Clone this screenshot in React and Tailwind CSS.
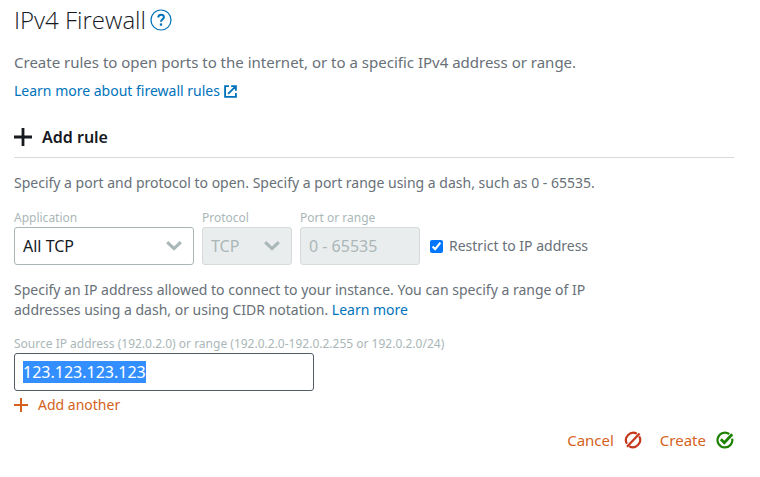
import React, { useEffect, useRef, useState } from 'react';

const PlusIcon = ({ size, stroke }) => (
  <svg width={size} height={size} viewBox="0 0 18 18" fill="none" stroke="currentColor" strokeWidth={stroke} aria-hidden="true">
    <path d="M9 0v18M0 9h18" />
  </svg>
);

const HelpIcon = () => (
  <svg width="22" height="22" viewBox="0 0 22 22" fill="none" stroke="currentColor" aria-hidden="true">
    <circle cx="11" cy="11" r="10" strokeWidth="1.2" />
    <path d="M8.3 8.6c0-1.9 1.2-2.8 2.8-2.8s2.8.9 2.8 2.4c0 2.1-2.9 2.2-2.9 4.6" strokeWidth="2" />
    <path d="M11 14.4v2.3" strokeWidth="2.3" />
  </svg>
);

const ExternalIcon = () => (
  <svg width="13" height="13" viewBox="0 0 12 12" fill="none" stroke="currentColor" strokeWidth="1.7" aria-hidden="true">
    <path d="M4.6 1H1v10h10V7.4M3.8 8.2l6.4-6.4M6.6 1H11v4.4" />
  </svg>
);

const ChevronIcon = () => (
  <svg width="16" height="10" viewBox="0 0 16 10" fill="none" stroke="currentColor" strokeWidth="3.2" aria-hidden="true">
    <path d="M1.2 1.2 8 7.6l6.8-6.4" />
  </svg>
);

const CancelIcon = () => (
  <svg width="18" height="18" viewBox="0 0 18 18" fill="none" stroke="#c5381c" strokeWidth="2.2" aria-hidden="true">
    <path d="M2.9 12.8A7.4 7.4 0 0 1 12.9 2.7M15.2 5.2A7.4 7.4 0 0 1 5.2 15.3" />
    <path d="M3 15.8 15.6 2.6" />
  </svg>
);

const CreateIcon = () => (
  <svg width="18" height="18" viewBox="0 0 18 18" fill="none" stroke="#1d8102" aria-hidden="true">
    <path d="M13.2 3A7.4 7.4 0 1 0 16.2 7.6" strokeWidth="2.2" />
    <path d="m4.9 8.3 3.4 3.5 7.9-8.6" strokeWidth="2.8" />
  </svg>
);

function SelectField({ id, label, options, className, disabled }) {
  return (
    <div className={className}>
      <label htmlFor={id} className="block text-xs leading-[18px] text-[#aab7b8]">{label}</label>
      <div className="relative">
        <select
          id={id}
          disabled={disabled}
          className="block h-[38px] w-full appearance-none rounded-[3px] border border-[#aab7b8] bg-white px-2 text-base text-[#16191f] disabled:border-[#d5dbdb] disabled:bg-[#eaeded] disabled:text-[#aab7b8] disabled:opacity-100"
        >
          {options.map((option) => (
            <option key={option}>{option}</option>
          ))}
        </select>
        <span className="pointer-events-none absolute inset-y-0 right-3 flex items-center text-[#aab7b8]">
          <ChevronIcon />
        </span>
      </div>
    </div>
  );
}

export default function App() {
  const [restrict, setRestrict] = useState(true);
  const [source, setSource] = useState('123.123.123.123');
  const sourceRef = useRef(null);

  // Select the address so that it can be typed over
  useEffect(() => {
    sourceRef.current?.focus();
    sourceRef.current?.select();
  }, []);

  return (
    <main className="min-h-screen bg-white pl-3.5 pr-[26px] font-['Noto_Sans',sans-serif] text-sm text-[#687078]">
      <div className="flex items-center gap-1">
        <h1 className="font-['Open_Sans',sans-serif] text-2xl font-light leading-10 text-[#16191f]">IPv4 Firewall</h1>
        <button type="button" aria-label="Help" className="text-[#0073bb]">
          <HelpIcon />
        </button>
      </div>
      <p className="mt-3 text-[15px] leading-5">
        Create rules to open ports to the internet, or to a specific IPv4 address or range.
      </p>
      <a href="#rules" className="mt-2 flex items-center gap-1 leading-[22px] text-[#0073bb]">
        Learn more about firewall rules
        <ExternalIcon />
      </a>

      <form onSubmit={(e) => e.preventDefault()}>
        <h2 className="mt-[23px] flex items-center gap-2.5 border-b border-[#d5dbdb] pb-2 text-base font-semibold leading-6 text-[#16191f]">
          <PlusIcon size={18} stroke={2.8} />
          Add rule
        </h2>
        <p className="mt-4 leading-[18px]">
          Specify a port and protocol to open. Specify a port range using a dash, such as 0 - 65535.
        </p>

        <div className="mt-[17px] flex items-end gap-2">
          <SelectField id="application" label="Application" options={['All TCP', 'All UDP', 'Custom']} className="w-[180px]" />
          <SelectField id="protocol" label="Protocol" options={['TCP']} className="w-[90px]" disabled />
          <div className="w-[120px]">
            <label htmlFor="port" className="block text-xs leading-[18px] text-[#aab7b8]">Port or range</label>
            <input
              id="port"
              type="text"
              value="0 - 65535"
              disabled
              readOnly
              className="block h-[38px] w-full rounded-[3px] border border-[#d5dbdb] bg-[#eaeded] px-2 text-base text-[#aab7b8]"
            />
          </div>
          <label className="flex h-[38px] items-center gap-1.5 pl-0.5">
            <input
              type="checkbox"
              checked={restrict}
              onChange={(e) => setRestrict(e.target.checked)}
              className="size-[13px] accent-[#0075ff]"
            />
            Restrict to IP address
          </label>
        </div>

        <p className="mt-[15px] max-w-[600px] leading-5">
          Specify an IP address allowed to connect to your instance. You can specify a range of IP
          addresses using a dash, or using CIDR notation.{' '}
          <a href="#cidr" className="text-[#0073bb]">Learn more</a>
        </p>

        <label htmlFor="source" className="mt-[15px] block text-xs leading-[18px] text-[#aab7b8]">
          Source IP address (192.0.2.0) or range (192.0.2.0-192.0.2.255 or 192.0.2.0/24)
        </label>
        <input
          id="source"
          ref={sourceRef}
          type="text"
          value={source}
          onChange={(e) => setSource(e.target.value)}
          className="block h-[38px] w-[300px] rounded-[3px] border border-[#545b64] px-2 text-base leading-5 text-[#16191f] outline-none selection:bg-[#338fff] selection:text-white"
        />
        <button type="button" className="mt-1 flex items-center gap-2.5 leading-5 text-[#d5621c]">
          <PlusIcon size={14} stroke={2.6} />
          Add another
        </button>

        <div className="mt-[15px] flex justify-end gap-[18px] text-[15px] leading-5 text-[#d5621c]">
          <button type="button" className="flex items-center gap-2.5">
            Cancel
            <CancelIcon />
          </button>
          <button type="submit" className="flex items-center gap-2.5">
            Create
            <CreateIcon />
          </button>
        </div>
      </form>
    </main>
  );
}
